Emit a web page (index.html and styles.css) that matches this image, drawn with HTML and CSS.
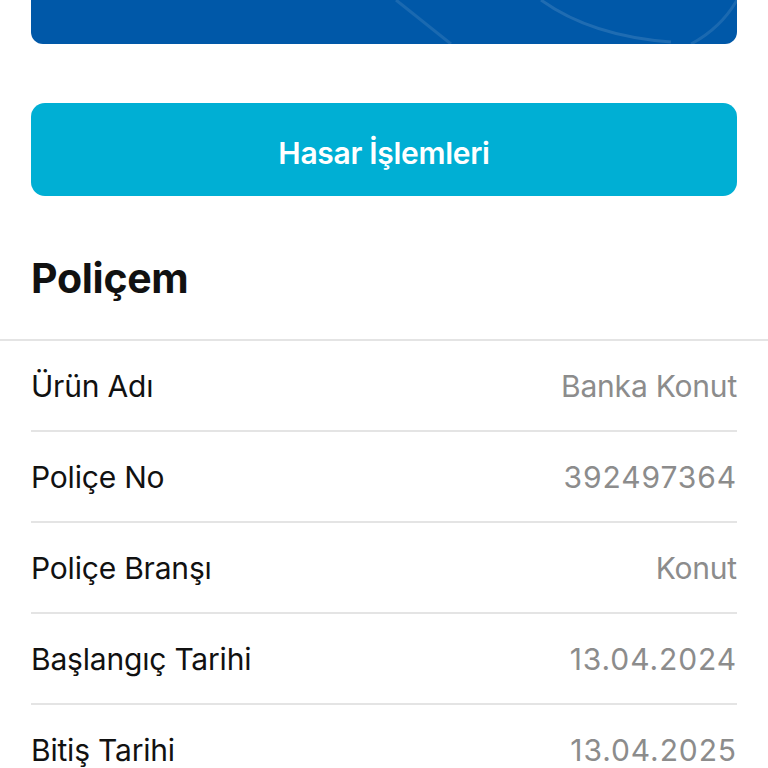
FILE: index.html
```html
<!DOCTYPE html>
<html lang="tr">
<head>
    <meta charset="UTF-8">
    <title>Poliçem</title>
    <link rel="stylesheet" href="styles.css">
</head>
<body>
<div class="wrap">
    <div class="banner">
        <svg class="banner-lines" viewBox="0 0 706 44" preserveAspectRatio="none">
            <path d="M365 0 L420 44" stroke="#ffffff" stroke-opacity="0.10" stroke-width="3" fill="none"/>
            <path d="M510 0 Q560 36 640 42" stroke="#ffffff" stroke-opacity="0.12" stroke-width="3" fill="none"/>
            <path d="M706 0 Q690 28 660 44" stroke="#ffffff" stroke-opacity="0.10" stroke-width="3" fill="none"/>
        </svg>
    </div>
    <a class="btn-hasar" href="#">Hasar İşlemleri</a>
    <h2 class="title">Poliçem</h2>
</div>
<ul class="info">
    <li><span class="label">Ürün Adı</span><span class="value">Banka Konut</span></li>
    <li><span class="label">Poliçe No</span><span class="value num">392497364</span></li>
    <li><span class="label">Poliçe Branşı</span><span class="value">Konut</span></li>
    <li><span class="label">Başlangıç Tarihi</span><span class="value num">13.04.2024</span></li>
    <li><span class="label">Bitiş Tarihi</span><span class="value num">13.04.2025</span></li>
</ul>
</body>
</html>
```
FILE: styles.css
```css
* {
    margin: 0;
    padding: 0;
    box-sizing: border-box;
}
body {
    background: #fff;
    font-family: Inter, "Noto Sans", "Liberation Sans", sans-serif;
    color: #111;
    overflow: hidden;
}
.wrap {
    padding: 0 31px;
}
.banner {
    height: 44px;
    background: #0058a8;
    border-radius: 0 0 12px 12px;
    overflow: hidden;
    position: relative;
}
.banner-lines {
    position: absolute;
    left: 0;
    top: 0;
    width: 100%;
    height: 100%;
}
.btn-hasar {
    display: flex;
    align-items: center;
    justify-content: center;
    margin-top: 59px;
    height: 93px;
    padding-top: 6px;
    background: #00afd4;
    border-radius: 14px;
    color: #fff;
    text-decoration: none;
    font-size: 30px;
    font-weight: 600;
    letter-spacing: -0.3px;
}
.title {
    font-size: 41px;
    font-weight: 700;
    letter-spacing: -0.3px;
    line-height: 50px;
    padding-top: 57px;
    height: 143px;
}
.info {
    list-style: none;
    border-top: 2px solid #e4e4e4;
}
.info li {
    display: flex;
    justify-content: space-between;
    align-items: center;
    height: 91px;
    margin: 0 31px;
    border-bottom: 2px solid #e4e4e4;
    font-size: 30px;
    letter-spacing: -0.2px;
}
.label {
    color: #111;
}
.value {
    color: #8c8c8c;
}
.value.num {
    letter-spacing: 0.9px;
}
```
